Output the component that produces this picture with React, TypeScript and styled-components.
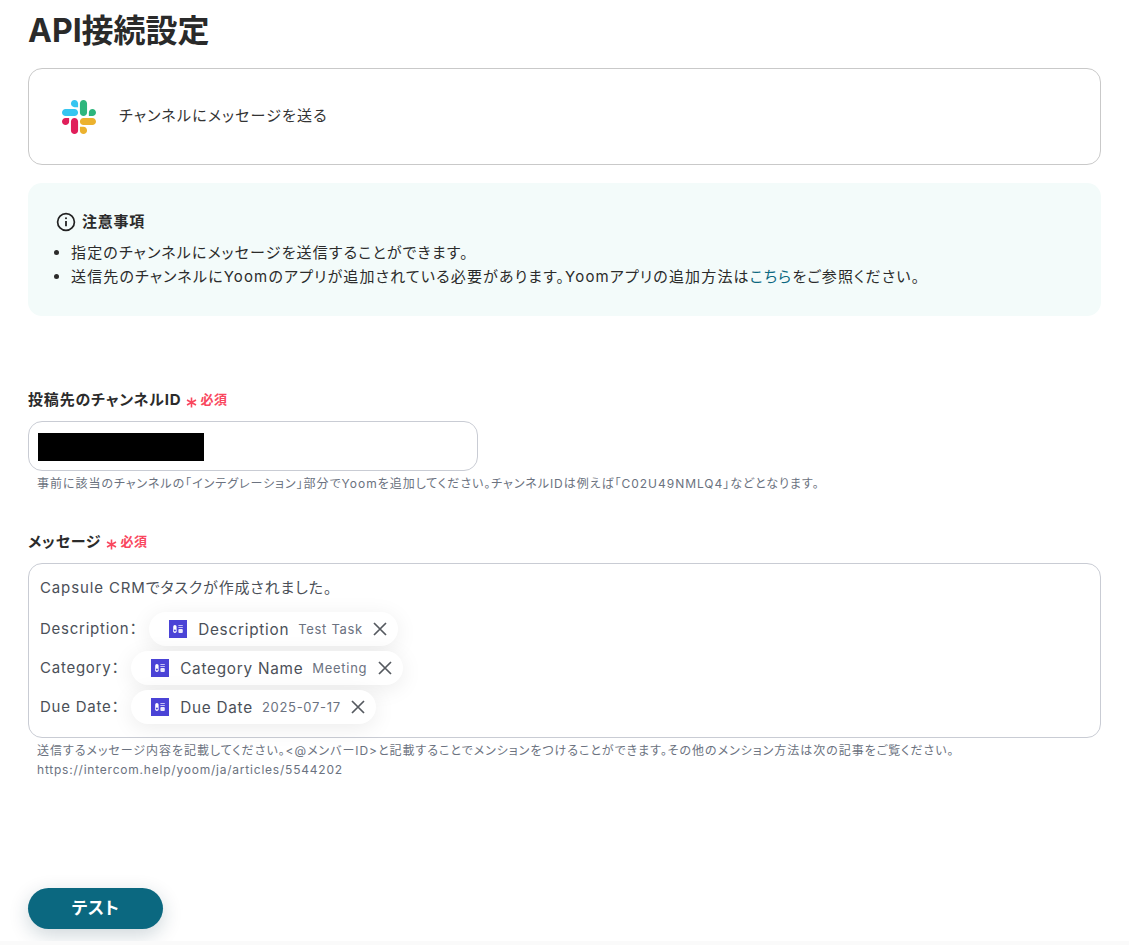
import React from "react";
import styled, { createGlobalStyle } from "styled-components";

const Global = createGlobalStyle`
  html, body { margin: 0; padding: 0; background: #fff; }
  body { font-family: Inter, "Noto Sans CJK JP", "Noto Sans", sans-serif; color: #2b2b2b; font-feature-settings: "palt"; }
`;
const Page = styled.div`
  width: 1129px; height: 945px; box-sizing: border-box; padding: 0 28px; overflow: hidden;
  display: flex; flex-direction: column; position: relative;
`;
const Title = styled.h1`
  margin: 11px 0 0; font-size: 32px; line-height: 40px; font-weight: 700; color: #2a2a2a;
`;
const ActionCard = styled.div`
  margin-top: 17px; height: 97px; box-sizing: border-box; border: 1px solid #c9c9c9; border-radius: 14px;
  display: flex; align-items: center; padding-left: 33px; gap: 23px; font-size: 15px; letter-spacing: 1.18px; color: #333;
`;
const ActionText = styled.span` margin-bottom: 5px; `;
const Notice = styled.section`
  margin-top: 18px; height: 133px; box-sizing: border-box; background: #f3fbfa; border-radius: 14px;
  padding: 27px 28px 0 28px;
`;
const NoticeHead = styled.div`
  display: flex; align-items: center; gap: 6px; font-size: 15px; letter-spacing: 0.75px; font-weight: 700; line-height: 24px; color: #2b2b2b;
`;
const NoticeList = styled.ul`
  margin: 7px 0 0; padding: 0 0 0 15px; font-size: 15px; letter-spacing: 1.15px; line-height: 24px; color: #2b2b2b;
`;
const Link = styled.span` color: #0b6880; `;
const Field = styled.div<{ $top: number }>` margin-top: ${p => p.$top}px; `;
const Label = styled.div`
  display: flex; align-items: center; font-size: 15px; letter-spacing: 0.82px; font-weight: 700; line-height: 20px; color: #2b2b2b; height: 20px;
`;
const Asterisk = styled.svg`
  margin: 4px 3px 0 5px; color: #f9475e;
`;
const Required = styled.span` color: #f9475e; font-size: 13px; letter-spacing: 0.6px; font-weight: 600; margin-bottom: 2px; `;
const Input = styled.div`
  margin-top: 11px; width: 450px; height: 50px; box-sizing: border-box; border: 1px solid #c9ccd4; border-radius: 14px;
  padding: 11px 9px;
`;
const Redaction = styled.div` width: 166px; height: 28px; background: #000; `;
const Hint = styled.div`
  margin: 3px 0 0 9px; font-size: 12px; letter-spacing: 0.97px; line-height: 19px; color: #6b7280;
`;
const HintUrl = styled.span` letter-spacing: 0.78px; `;
const Editor = styled.div`
  margin-top: 11px; height: 175px; box-sizing: border-box; border: 1px solid #c9ccd4; border-radius: 14px;
  padding: 7px 11px; font-size: 15px; color: #4b5058; letter-spacing: 0.75px;
`;
const Line = styled.div`
  height: 39px; display: flex; align-items: center; white-space: nowrap;
  &:first-child { height: 30px; margin-bottom: 7px; letter-spacing: 0.87px; }
`;
const Pill = styled.span`
  display: inline-flex; align-items: center; height: 34px; box-sizing: border-box; padding: 0 10px 0 20px; margin: 3px 0 0 11px;
  background: #fff; border-radius: 17px; box-shadow: 0 4px 22px rgba(0,0,0,0.08);
`;
const PillName = styled.span` margin-left: 11.5px; font-size: 15.3px; color: #4b5058; `;
const PillValue = styled.span` margin-left: 9px; font-size: 13px; letter-spacing: 0.7px; color: #6b7280; `;
const Close = styled.span` display: inline-flex; margin-left: 9.5px; color: #55595f; `;
const TestButton = styled.button`
  position: absolute; left: 28px; top: 888px; width: 135px; height: 41px; border: 0; border-radius: 21px; padding: 0 0 5px;
  background: #0b6880; color: #fff; font: 700 17px Inter, "Noto Sans CJK JP", sans-serif; letter-spacing: 0.5px; font-feature-settings: "palt";
  box-shadow: 0 6px 20px rgba(11, 50, 70, 0.2);
`;
const Band = styled.div`
  position: absolute; left: 0; right: 0; bottom: 0; height: 4px; background: #fafafa;
`;

const SlackLogo = () => (
  <svg width="34" height="34" viewBox="0 0 122.8 122.8">
    <path fill="#e01e5a" d="M25.8 77.6c0 7.1-5.8 12.9-12.9 12.9S0 84.7 0 77.6s5.8-12.9 12.9-12.9h12.9v12.9zm6.5 0c0-7.1 5.8-12.9 12.9-12.9s12.9 5.8 12.9 12.9v32.3c0 7.1-5.8 12.9-12.9 12.9s-12.9-5.8-12.9-12.9V77.6z"/>
    <path fill="#36c5f0" d="M45.2 25.8c-7.1 0-12.9-5.8-12.9-12.9S38.1 0 45.2 0s12.9 5.8 12.9 12.9v12.9H45.2zm0 6.5c7.1 0 12.9 5.8 12.9 12.9s-5.8 12.9-12.9 12.9H12.9C5.8 58.1 0 52.3 0 45.2s5.8-12.9 12.9-12.9h32.3z"/>
    <path fill="#2eb67d" d="M97 45.2c0-7.1 5.8-12.9 12.9-12.9s12.9 5.8 12.9 12.9-5.8 12.9-12.9 12.9H97V45.2zm-6.5 0c0 7.1-5.8 12.9-12.9 12.9s-12.9-5.8-12.9-12.9V12.9C64.7 5.8 70.5 0 77.6 0s12.9 5.8 12.9 12.9v32.3z"/>
    <path fill="#ecb22e" d="M77.6 97c7.1 0 12.9 5.8 12.9 12.9s-5.8 12.9-12.9 12.9-12.9-5.8-12.9-12.9V97h12.9zm0-6.5c-7.1 0-12.9-5.8-12.9-12.9s5.8-12.9 12.9-12.9h32.3c7.1 0 12.9 5.8 12.9 12.9s-5.8 12.9-12.9 12.9H77.6z"/>
  </svg>
);
const InfoIcon = () => (
  <svg width="20" height="20" viewBox="0 0 20 20" fill="none" stroke="#222" strokeWidth="1.7">
    <circle cx="10" cy="10" r="8.4" />
    <path d="M10 9v5.2" strokeWidth="1.8" />
    <circle cx="10" cy="6.2" r="1" fill="#222" stroke="none" />
  </svg>
);
const Star = () => (
  <Asterisk width="11" height="11" viewBox="0 0 11 11" fill="none" stroke="currentColor" strokeWidth="1.6">
    <path d="M5.5 0.5v10M1 3l9 5M10 3l-9 5" />
  </Asterisk>
);
const CapsuleIcon = () => (
  <svg width="18" height="18" viewBox="0 0 18 18">
    <rect width="18" height="18" fill="#4a43d6" />
    <rect x="4.2" y="5" width="3.4" height="8" rx="1.7" fill="#fff" />
    <circle cx="5.9" cy="10.6" r="1" fill="#4a43d6" />
    <rect x="9.4" y="5" width="4.4" height="1" fill="#c5c2f5" />
    <rect x="9.4" y="7" width="4.4" height="1" fill="#c5c2f5" />
    <rect x="9.4" y="9" width="4.4" height="4" rx="1" fill="#e9e8fc" />
  </svg>
);
const X = () => (
  <svg width="16" height="16" viewBox="0 0 16 16" fill="none" stroke="currentColor" strokeWidth="1.7">
    <path d="M2 2l12 12M14 2L2 14" />
  </svg>
);
const Tag = ({ name, value }: { name: string; value: string }) => (
  <Pill>
    <CapsuleIcon />
    <PillName>{name}</PillName>
    <PillValue>{value}</PillValue>
    <Close><X /></Close>
  </Pill>
);

export default function App() {
  return (
    <Page>
      <Global />
      <Title>API接続設定</Title>
      <ActionCard>
        <SlackLogo />
        <ActionText>チャンネルにメッセージを送る</ActionText>
      </ActionCard>
      <Notice>
        <NoticeHead><InfoIcon />注意事項</NoticeHead>
        <NoticeList>
          <li>指定のチャンネルにメッセージを送信することができます。</li>
          <li>送信先のチャンネルにYoomのアプリが追加されている必要があります。Yoomアプリの追加方法は<Link>こちら</Link>をご参照ください。</li>
        </NoticeList>
      </Notice>
      <Field $top={74}>
        <Label>投稿先のチャンネルID<Star /><Required>必須</Required></Label>
        <Input><Redaction /></Input>
        <Hint>事前に該当のチャンネルの「インテグレーション」部分でYoomを追加してください。チャンネルIDは例えば「C02U49NMLQ4」などとなります。</Hint>
      </Field>
      <Field $top={39}>
        <Label>メッセージ<Star /><Required>必須</Required></Label>
        <Editor>
          <Line>Capsule CRMでタスクが作成されました。</Line>
          <Line>Description：<Tag name="Description" value="Test Task" /></Line>
          <Line>Category：<Tag name="Category Name" value="Meeting" /></Line>
          <Line>Due Date：<Tag name="Due Date" value="2025-07-17" /></Line>
        </Editor>
        <Hint>送信するメッセージ内容を記載してください。&lt;@メンバーID&gt;と記載することでメンションをつけることができます。その他のメンション方法は次の記事をご覧ください。<br /><HintUrl>https://intercom.help/yoom/ja/articles/5544202</HintUrl></Hint>
      </Field>
      <TestButton>テスト</TestButton>
      <Band />
    </Page>
  );
}
